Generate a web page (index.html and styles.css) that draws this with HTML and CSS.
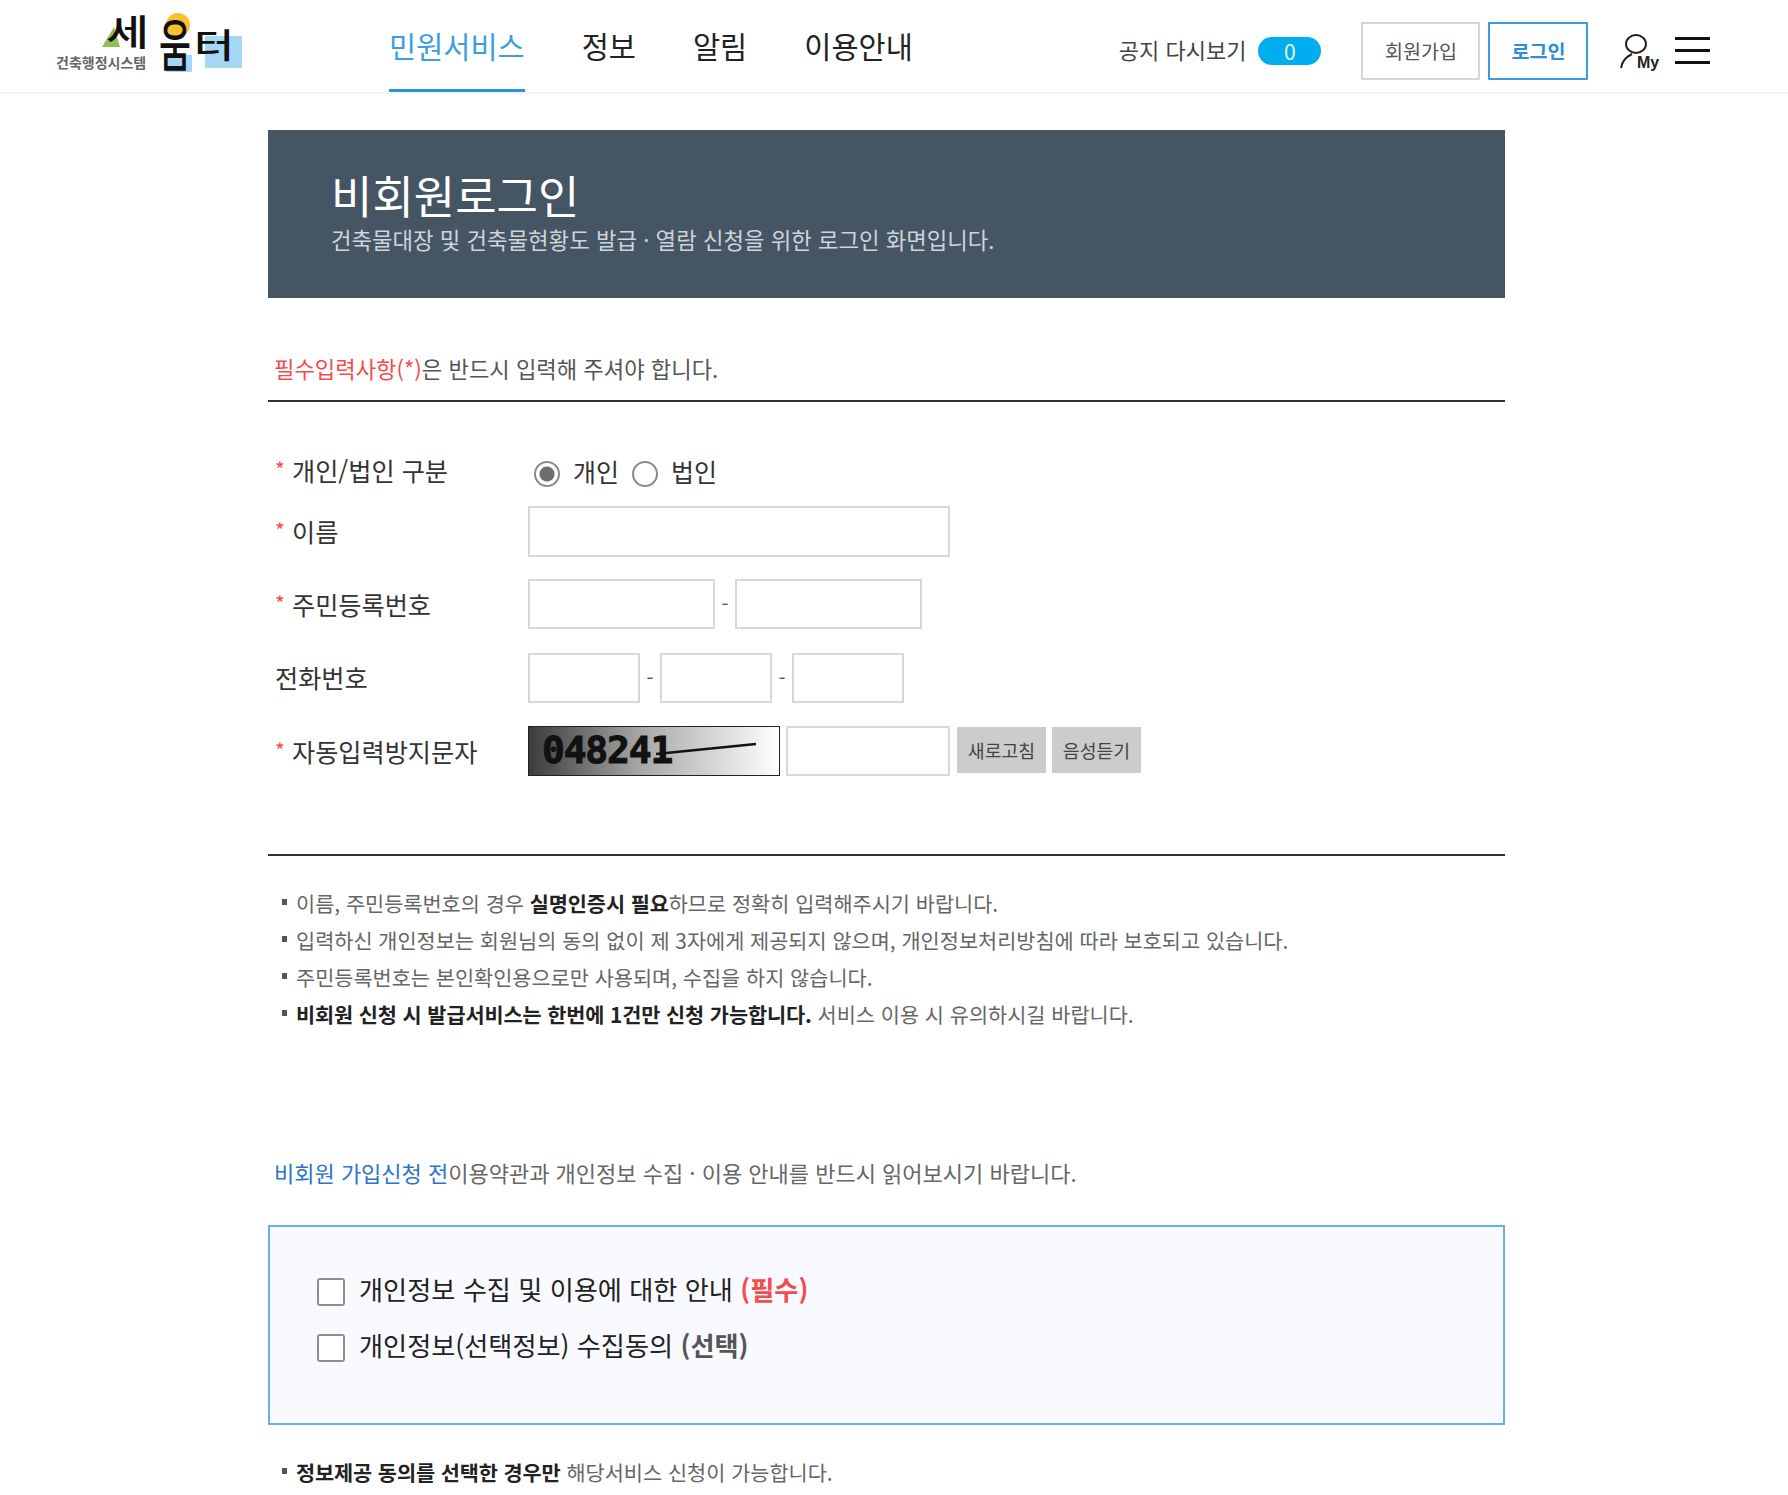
FILE: index.html
```html
<!DOCTYPE html>
<html lang="ko">
<head>
  <meta charset="UTF-8">
  <title>비회원로그인</title>
  <link rel="stylesheet" href="styles.css">
</head>
<body>
  <header class="top">
    <a class="logo" href="#">
      <svg width="190" height="80" viewBox="0 0 190 80">
        <polygon points="58,27 46,47 64,47" fill="#8cc152"/>
        <circle cx="122" cy="25" r="12" fill="#fbc02d"/>
        <rect x="110" y="55" width="26" height="17" fill="#a5d8f5"/>
        <rect x="149" y="36" width="37" height="32" fill="#a5d8f5"/>
        <text transform="translate(50 46) scale(1.3 1)" class="logo-main" font-size="36">세</text>
        <text transform="translate(103 66) scale(.62 1)" class="logo-main" font-size="56">움</text>
        <text transform="translate(138 58) scale(1.28 1)" class="logo-main" font-size="34">터</text>
        <text x="0" y="68" class="logo-sub">건축행정시스템</text>
      </svg>
    </a>
    <nav class="gnb">
      <a class="on" href="#">민원서비스</a>
      <a href="#">정보</a>
      <a href="#">알림</a>
      <a href="#">이용안내</a>
    </nav>
    <div class="util">
      <span class="notice-txt">공지 다시보기</span>
      <span class="pill">0</span>
      <a class="btn-join" href="#">회원가입</a>
      <a class="btn-login" href="#">로그인</a>
      <a class="my" href="#">
        <svg width="42" height="40" viewBox="0 0 42 40">
          <ellipse cx="16" cy="11" rx="10" ry="9" fill="none" stroke="#222" stroke-width="2"/>
          <path d="M12 21 C6 24 2 28 1 35" fill="none" stroke="#222" stroke-width="2"/>
          <text x="17" y="35" class="my-txt">My</text>
        </svg>
      </a>
      <button class="burger" type="button" aria-label="메뉴"><i></i><i></i><i></i></button>
    </div>
  </header>

  <main class="wrap">
    <section class="banner">
      <h1>비회원로그인</h1>
      <p>건축물대장 및 건축물현황도 발급 · 열람 신청을 위한 로그인 화면입니다.</p>
    </section>

    <p class="req-note"><span class="red">필수입력사항(*)</span>은 반드시 입력해 주셔야 합니다.</p>

    <form class="form">
      <div class="row row-radio">
        <label class="lbl"><em>*</em>개인/법인 구분</label>
        <div class="fields">
          <input class="radio" type="radio" name="kind" checked>
          <span class="radio-txt">개인</span>
          <input class="radio" type="radio" name="kind">
          <span class="radio-txt">법인</span>
        </div>
      </div>
      <div class="row row-name">
        <label class="lbl"><em>*</em>이름</label>
        <div class="fields"><input class="inp w-name" type="text"></div>
      </div>
      <div class="row row-rrn">
        <label class="lbl"><em>*</em>주민등록번호</label>
        <div class="fields">
          <input class="inp w-rrn" type="text"><span class="dash">-</span><input class="inp w-rrn" type="text">
        </div>
      </div>
      <div class="row">
        <label class="lbl">전화번호</label>
        <div class="fields">
          <input class="inp w-tel" type="text"><span class="dash">-</span><input class="inp w-tel" type="text"><span class="dash">-</span><input class="inp w-tel" type="text">
        </div>
      </div>
      <div class="row">
        <label class="lbl"><em>*</em>자동입력방지문자</label>
        <div class="fields gap-s">
          <div class="captcha">
            <span>048241</span>
            <svg class="captcha-line" width="102" height="16" viewBox="0 0 102 16"><path d="M0 13 L100 3" stroke="#111" stroke-width="2.5"/></svg>
          </div>
          <input class="inp w-cap" type="text">
          <button class="btn-gray" type="button">새로고침</button>
          <button class="btn-gray" type="button">음성듣기</button>
        </div>
      </div>
    </form>

    <ul class="notes">
      <li>이름, 주민등록번호의 경우 <b>실명인증시 필요</b>하므로 정확히 입력해주시기 바랍니다.</li>
      <li>입력하신 개인정보는 회원님의 동의 없이 제 3자에게 제공되지 않으며, 개인정보처리방침에 따라 보호되고 있습니다.</li>
      <li>주민등록번호는 본인확인용으로만 사용되며, 수집을 하지 않습니다.</li>
      <li><b>비회원 신청 시 발급서비스는 한번에 1건만 신청 가능합니다.</b> 서비스 이용 시 유의하시길 바랍니다.</li>
    </ul>

    <p class="agree-intro"><span class="blue">비회원 가입신청 전</span>이용약관과 개인정보 수집 · 이용 안내를 반드시 읽어보시기 바랍니다.</p>

    <div class="agree-box">
      <label class="agree"><input type="checkbox"><span>개인정보 수집 및 이용에 대한 안내 <b class="red">(필수)</b></span></label>
      <label class="agree"><input type="checkbox"><span>개인정보(선택정보) 수집동의 <b class="gray">(선택)</b></span></label>
    </div>

    <ul class="notes notes-last">
      <li><b>정보제공 동의를 선택한 경우만</b> 해당서비스 신청이 가능합니다.</li>
    </ul>
  </main>
</body>
</html>
```

FILE: styles.css
```css
* {
  box-sizing: border-box;
}
html, body {
  margin: 0;
  padding: 0;
  height: 1495px;
  overflow: hidden;
}
body {
  font-family: "Noto Sans CJK KR", "Noto Sans", sans-serif;
  color: #333;
  background: #fff;
}
a {
  color: inherit;
  text-decoration: none;
}
.red {
  color: #f44b4b;
}
.blue {
  color: #2b74c9;
}
.gray {
  color: #555;
}

/* header */
.top {
  display: flex;
  align-items: flex-start;
  height: 94px;
  padding-left: 56px;
  border-bottom: 2px solid #f3f3f3;
}
.logo {
  display: block;
  width: 333px;
  height: 80px;
}
.logo-main {
  font-weight: 500;
  fill: #111;
}
.logo-sub {
  font-size: 14px;
  font-weight: 700;
  fill: #666;
}
.gnb {
  display: flex;
  gap: 57px;
}
.gnb a {
  display: block;
  height: 92px;
  padding-top: 23px;
  font-size: 29.5px;
  line-height: 44px;
  color: #222;
  border-bottom: 3px solid transparent;
}
.gnb a.on {
  color: #3a9fe0;
  border-bottom-color: #2a95de;
}
.util {
  display: flex;
  align-items: center;
  height: 92px;
  padding-top: 9px;
  margin-left: 206px;
}
.notice-txt {
  margin-bottom: 4px;
  font-size: 22px;
  color: #444;
}
.pill {
  width: 63px;
  height: 28px;
  margin-left: 12px;
  border-radius: 14px;
  background: #00aeef;
  color: #e8f7d0;
  font-size: 21px;
  line-height: 28px;
  text-align: center;
}
.btn-join, .btn-login {
  height: 58px;
  font-size: 19.6px;
  line-height: 54px;
  text-align: center;
  border-radius: 1px;
}
.btn-join {
  width: 119px;
  margin-left: 40px;
  border: 2px solid #d5d5d5;
  color: #555;
}
.btn-login {
  width: 100px;
  margin-left: 8px;
  border: 2px solid #3c9ade;
  color: #2f8fd6;
  font-weight: 700;
}
.my {
  display: block;
  width: 42px;
  height: 40px;
  margin-left: 32px;
  margin-top: 4px;
}
.my-txt {
  font-family: "Liberation Sans", sans-serif;
  font-size: 16px;
  font-weight: 700;
  fill: #222;
}
.burger {
  display: flex;
  flex-direction: column;
  gap: 9px;
  width: 35px;
  margin-left: 13px;
  padding: 0;
  border: 0;
  background: none;
}
.burger i {
  display: block;
  height: 3px;
  background: #111;
}

/* content */
.wrap {
  width: 1237px;
  margin-left: 268px;
}
.banner {
  height: 168px;
  margin-top: 36px;
  padding: 37px 63px 0;
  background: #465564;
  color: #fff;
}
.banner h1 {
  margin: 0;
  font-size: 45px;
  font-weight: 400;
  line-height: 56px;
}
.banner p {
  margin: 0;
  font-size: 22.3px;
  line-height: 32px;
  color: #cfd4d9;
}
.req-note {
  height: 48px;
  margin: 54px 0 0;
  padding-left: 6px;
  font-size: 22.2px;
  line-height: 32px;
  color: #555;
}
.form {
  padding: 52px 0 78px;
  border-top: 2px solid #333;
  border-bottom: 2px solid #333;
}
.row {
  display: flex;
  align-items: center;
  height: 50px;
  margin-bottom: 23px;
}
.row:last-child {
  margin-bottom: 0;
}
.row-radio {
  height: 36px;
  margin-bottom: 16px;
}
.row-radio .lbl {
  padding-bottom: 6px;
}
.row-name {
  height: 51px;
  margin-bottom: 22px;
}
.row-rrn {
  margin-bottom: 24px;
}
.lbl {
  flex: none;
  width: 260px;
  padding-left: 7px;
  padding-bottom: 2px;
  font-size: 25.2px;
  line-height: 36px;
  color: #333;
}
.lbl em {
  display: inline-block;
  width: 17px;
  color: #f44b4b;
  font-style: normal;
  font-size: 21px;
  vertical-align: 3px;
}
.fields {
  display: flex;
  align-items: center;
}
.gap-s {
  gap: 6px;
}
.radio {
  appearance: none;
  width: 26px;
  height: 26px;
  margin: 4px 13px 0 6px;
  border: 2px solid #8a8a8a;
  border-radius: 50%;
  background: #fff;
}
.radio:checked {
  background: radial-gradient(circle, #6e6e6e 0 7px, #fff 8px);
}
.radio + .radio-txt + .radio {
  margin-left: 13px;
}
.radio-txt {
  margin-bottom: 2px;
  font-size: 25px;
  line-height: 36px;
  color: #333;
}
.inp {
  display: block;
  height: 50px;
  padding: 0 8px;
  border: 2px solid #d8d8d8;
  background: #fff;
}
.w-name {
  width: 422px;
  height: 51px;
}
.w-rrn {
  width: 187px;
}
.w-tel {
  width: 112px;
}
.w-cap {
  width: 164px;
}
.dash {
  width: 20px;
  font-size: 20px;
  line-height: 44px;
  text-align: center;
  color: #555;
}
.captcha {
  position: relative;
  width: 252px;
  height: 50px;
  padding-left: 13px;
  border: 1.5px solid #222;
  background: linear-gradient(90deg, #3c3c3c, #a8a8a8 45%, #fff);
  font-family: "DejaVu Sans Mono", monospace;
  font-size: 38px;
  font-weight: 700;
  line-height: 47px;
  letter-spacing: -1.2px;
  -webkit-text-stroke: 1px #111;
  color: #111;
  overflow: hidden;
}
.captcha-line {
  position: absolute;
  left: 127px;
  top: 14px;
}
.btn-gray {
  width: 89px;
  height: 46px;
  margin-bottom: 3px;
  padding: 0;
  border: 0;
  background: #ccc;
  font-family: inherit;
  font-size: 18.3px;
  color: #444;
}
.w-cap + .btn-gray {
  margin-left: 1px;
}

.notes {
  margin: 29px 0 0;
  padding: 0;
  list-style: none;
  font-size: 20.8px;
  line-height: 37px;
  color: #666;
}
.notes li {
  position: relative;
  padding-left: 28px;
  white-space: nowrap;
}
.notes li::before {
  content: "";
  position: absolute;
  left: 14px;
  top: 14px;
  width: 5px;
  height: 6px;
  background: #555;
}
.notes b {
  color: #222;
  font-weight: 700;
  letter-spacing: -0.1px;
}
.agree-intro {
  margin: 123px 0 0;
  padding-left: 6px;
  font-size: 22px;
  line-height: 32px;
  color: #666;
}
.agree-box {
  height: 200px;
  margin-top: 37px;
  padding: 43px 47px 0;
  border: 2px solid #5fb4e5;
  background: #f8faff;
}
.agree {
  display: flex;
  align-items: flex-start;
  height: 56px;
  font-size: 26.2px;
  line-height: 38px;
  color: #222;
}
.agree input {
  appearance: none;
  flex: none;
  width: 28px;
  height: 28px;
  margin: 8px 14px 0 0;
  border: 2px solid #8f8f8f;
  border-radius: 3px;
  background: #fff;
}
.notes-last {
  margin-top: 29px;
}
```
